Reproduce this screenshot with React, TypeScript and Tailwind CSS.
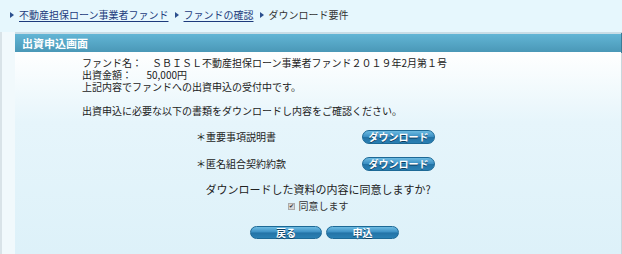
const font = { fontFamily: '"Noto Sans CJK JP", "Noto Sans", sans-serif' };

const Bullet = () => (
  <span className="inline-block w-0 h-0 border-y-[3px] border-y-transparent border-l-[4px] border-l-[#2b4f8e] mr-[5px] mb-[1px]" />
);

const BlueButton = ({ label, className }: { label: string; className?: string }) => (
  <button
    type="button"
    className={`flex items-center justify-center rounded-full border border-[#1d6996] bg-[linear-gradient(to_bottom,#6dbbe2_0%,#3b8fc3_48%,#2373a6_52%,#2a80b3_100%)] text-white font-bold text-[10px] leading-none [text-shadow:0_1px_0_#0c3d5e] ${className}`}
  >
    {label}
  </button>
);

const DownloadRow = ({ label }: { label: string }) => (
  <div className="flex items-center ml-[181px] h-[14px]">
    <span className="w-[166px] text-[10px] leading-none text-[#222]">＊{label}</span>
    <BlueButton label="ダウンロード" className="w-[73px] h-[14px]" />
  </div>
);

const App = () => {
  return (
    <div className="w-[622px] h-[254px] overflow-hidden bg-[#e6f7fd]" style={font}>
      <nav className="h-[32px] flex items-center pl-[10px] pb-[2px] text-[10px] leading-none">
        <Bullet />
        <a href="#!" className="text-[#1d3b7c] underline underline-offset-2">不動産担保ローン事業者ファンド</a>
        <span className="ml-[6px]"><Bullet /></span>
        <a href="#!" className="text-[#1d3b7c] underline underline-offset-2">ファンドの確認</a>
        <span className="ml-[6px]"><Bullet /></span>
        <span className="text-[#333]">ダウンロード要件</span>
      </nav>
      <div className="flex h-[222px]">
        <div className="w-[15px] border-l-2 border-l-[#d9e3e8] bg-[#f1f9fc]" />
        <div className="flex-1 flex flex-col border-r border-r-[#c9d6dc]">
          <div className="h-[20px] border-t-2 border-t-[#c9dde6] bg-[linear-gradient(to_bottom,#62b5d5,#4a98b7)] flex items-center pl-[7px] shadow-[1px_1px_0_#3a7d98]">
            <h1 className="text-white font-bold text-[11px] leading-none">出資申込画面</h1>
          </div>
          <div className="flex-1 bg-[linear-gradient(to_bottom,#ffffff_0%,#e6f5fb_35%,#ddf1f9_100%)] pt-[5px]">
            <div className="pl-[67px] text-[10px] leading-[12px] text-[#222]">
              <p>ファンド名：　ＳＢＩＳＬ不動産担保ローン事業者ファンド２０１９年2月第１号</p>
              <p>出資金額：　 &nbsp;50,000円</p>
              <p>上記内容でファンドへの出資申込の受付中です。</p>
              <p>&nbsp;</p>
              <p>出資申込に必要な以下の書類をダウンロードし内容をご確認ください。</p>
            </div>
            <div className="mt-[13px] flex flex-col gap-[13px]">
              <DownloadRow label="重要事項説明書" />
              <DownloadRow label="匿名組合契約約款" />
            </div>
            <p className="mt-[11px] text-center text-[11px] leading-[14px] text-[#222]">
              ダウンロードした資料の内容に同意しますか?
            </p>
            <label className="mt-[5px] flex items-center justify-center gap-[4px] text-[10px] leading-none text-[#333]">
              <span className="w-[7px] h-[7px] bg-[#d8d8d8] border border-[#aaa] flex items-center justify-center text-[6px] leading-none text-[#333]">✔</span>
              同意します
            </label>
            <div className="mt-[15px] flex justify-center gap-[4px] pl-[13px]">
              <BlueButton label="戻る" className="w-[72px] h-[13px]" />
              <BlueButton label="申込" className="w-[73px] h-[13px]" />
            </div>
          </div>
        </div>
      </div>
    </div>
  );
};

export default App;
